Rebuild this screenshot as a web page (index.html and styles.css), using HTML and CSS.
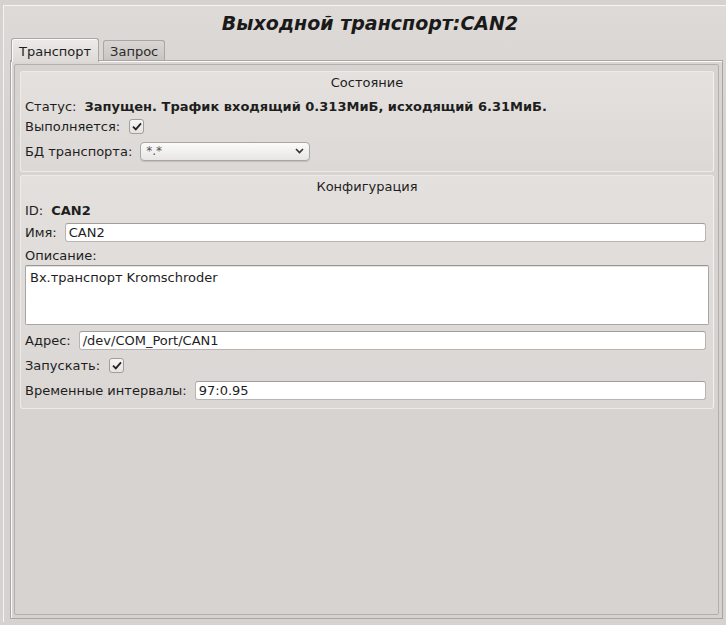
FILE: index.html
```html
<!DOCTYPE html>
<html lang="ru">
<head>
    <meta charset="UTF-8">
    <title>Выходной транспорт:CAN2</title>
    <link rel="stylesheet" href="styles.css">
</head>
<body>

    <div class="window">
        <h1 class="title">Выходной транспорт:CAN2</h1>

        <div class="tabs">
            <div class="tab tab-active">Транспорт</div>
            <div class="tab">Запрос</div>
        </div>

        <div class="pane">
            <div class="pane-inner">

                <!-- Состояние -->
                <div class="group group-state">
                    <div class="group-title">Состояние</div>
                    <div class="row row-status">
                        <span>Статус:</span>
                        <b>Запущен. Трафик входящий 0.313МиБ, исходящий 6.31МиБ.</b>
                    </div>
                    <div class="row row-run">
                        <span>Выполняется:</span>
                        <span class="check">
                            <svg width="10" height="9" viewBox="0 0 10 9"><path d="M1 4.6 L3.8 7.4 L9 1.4" fill="none" stroke="#222" stroke-width="1.8"/></svg>
                        </span>
                    </div>
                    <div class="row row-db">
                        <span>БД транспорта:</span>
                        <div class="combo">
                            <span>*.*</span>
                            <svg width="9" height="6" viewBox="0 0 9 6"><path d="M1 1 L4.5 4.5 L8 1" fill="none" stroke="#333" stroke-width="1.6"/></svg>
                        </div>
                    </div>
                </div>

                <!-- Конфигурация -->
                <div class="group group-conf">
                    <div class="group-title">Конфигурация</div>
                    <div class="row row-id">
                        <span>ID:</span>
                        <b>CAN2</b>
                    </div>
                    <div class="row row-name">
                        <span>Имя:</span>
                        <div class="field">CAN2</div>
                    </div>
                    <div class="row row-desc">
                        <span>Описание:</span>
                    </div>
                    <div class="textarea">Вх.транспорт Kromschroder</div>
                    <div class="row row-addr">
                        <span>Адрес:</span>
                        <div class="field">/dev/COM_Port/CAN1</div>
                    </div>
                    <div class="row row-start">
                        <span>Запускать:</span>
                        <span class="check">
                            <svg width="10" height="9" viewBox="0 0 10 9"><path d="M1 4.6 L3.8 7.4 L9 1.4" fill="none" stroke="#222" stroke-width="1.8"/></svg>
                        </span>
                    </div>
                    <div class="row row-time">
                        <span>Временные интервалы:</span>
                        <div class="field">97:0.95</div>
                    </div>
                </div>

            </div>
        </div>
    </div>

</body>
</html>
```

FILE: styles.css
```css
body {
    margin: 0;
    background-color: #d6d2cf;
    font-family: "DejaVu Sans", sans-serif;
    font-size: 13px;
    color: #1e1e1e;
}

.window {
    margin: 5px 0 0 3px;
    height: 616px;
    border-top: 1px solid #f6f4f2;
    border-left: 1px solid #f6f4f2;
    background: linear-gradient(#dedad7, #d6d2cf 120px);
    display: flex;
    flex-direction: column;
}

.title {
    margin: 0;
    padding: 2px 0 0 10px;
    height: 31px;
    line-height: 31px;
    text-align: center;
    font-size: 19px;
    font-weight: bold;
    font-style: italic;
    color: #1a1a1a;
}

/* Onglets */
.tabs {
    display: flex;
    align-items: flex-end;
    padding-left: 7px;
    height: 21px;
    position: relative;
    z-index: 1;
}

.tab {
    height: 19px;
    line-height: 21px;
    padding: 0 6px;
    margin-right: 4px;
    border: 1px solid #aaa6a3;
    border-bottom: none;
    border-radius: 3px 3px 0 0;
    background: linear-gradient(#d9d6d3, #c9c5c2);
    color: #2a2a2a;
}

.tab-active {
    height: 23px;
    line-height: 25px;
    padding: 0 7px;
    margin-bottom: -2px;
    background: linear-gradient(#eceae8, #dedad7);
    box-shadow: inset 1px 1px 0 #fbfaf9;
    color: #1e1e1e;
}

.pane {
    flex: 1;
    margin: 0 3px 3px 6px;
    border: 1px solid #a9a5a2;
    box-shadow: inset 1px 1px 0 #fbfaf9;
    padding: 3px;
    display: flex;
}

.pane-inner {
    flex: 1;
    border: 1px solid #b3afac;
    border-radius: 2px;
    padding: 6px 4px 0 5px;
    background-color: #d7d3d0;
}

/* Groupes */
.group {
    border: 1px solid #ecebe9;
    border-right-color: #f4f3f2;
    border-radius: 3px;
    background: linear-gradient(#e4e1de, #dcd8d5);
    padding: 0 4px;
}

.group-conf {
    margin-top: 3px;
    background: linear-gradient(#e3e0dd, #dad6d3 240px);
    padding-bottom: 8px;
}

.group-state {
    padding-bottom: 10px;
}

.group-title {
    height: 22px;
    line-height: 22px;
    text-align: center;
}

.row {
    display: flex;
    align-items: center;
    gap: 8px;
    height: 20px;
    white-space: nowrap;
}

.row b {
    font-weight: bold;
}

.row-status { margin-top: 2px; }
.row-run { height: 20px; }
.row-db { margin-top: 5px; }

.row-id { margin-top: 2px; }
.row-name { margin-top: 2px; }
.row-desc { margin-top: 3px; }
.row-addr { margin-top: 5px; }
.row-start { margin-top: 5px; }
.row-time { margin-top: 5px; }

.check {
    width: 13px;
    height: 13px;
    margin-left: 1px;
    border: 1px solid #a29e9b;
    border-radius: 3px;
    background: linear-gradient(#f7f6f5, #e6e3e0);
    display: flex;
    align-items: center;
    justify-content: center;
}

.combo {
    width: 158px;
    height: 17px;
    padding: 0 5px;
    border: 1px solid #aaa6a3;
    border-radius: 4px;
    background: linear-gradient(#fbfbfa, #e8e6e4);
    box-shadow: 0 1px 0 #c4c0bd;
    display: flex;
    align-items: center;
    justify-content: space-between;
    color: #555;
    font-size: 12px;
}

.field {
    flex: 1;
    height: 17px;
    line-height: 17px;
    padding-left: 3px;
    margin-right: 3px;
    background-color: #ffffff;
    border: 1px solid #b8b4b1;
    border-top-color: #a19d9a;
    border-radius: 3px;
    color: #1e1e1e;
}

.textarea {
    height: 51px;
    padding: 4px 3px 3px 4px;
    border: 1px solid #a9a5a2;
    border-top-color: #9a9693;
    border-radius: 2px;
    background-color: #ffffff;
    box-shadow: inset 0 1px 0 #e4e2e0;
}
```
